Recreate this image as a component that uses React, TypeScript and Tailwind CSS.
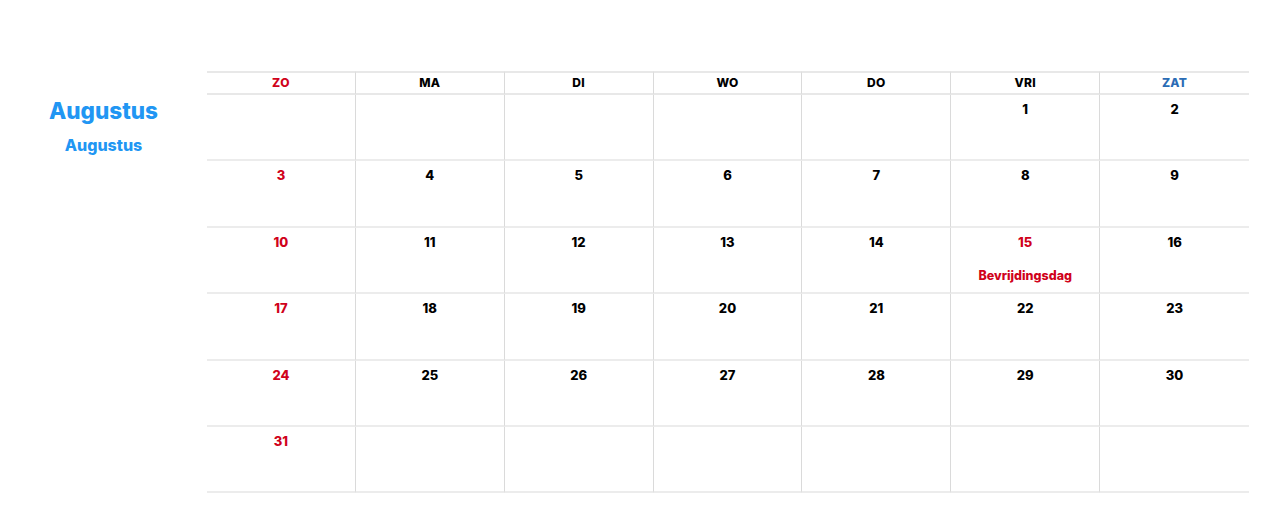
const days = ["ZO", "MA", "DI", "WO", "DO", "VRI", "ZAT"];

const cells: (number | null)[] = [
  null, null, null, null, null, 1, 2,
  3, 4, 5, 6, 7, 8, 9,
  10, 11, 12, 13, 14, 15, 16,
  17, 18, 19, 20, 21, 22, 23,
  24, 25, 26, 27, 28, 29, 30,
  31, null, null, null, null, null, null,
];

const holidays: Record<number, string> = { 15: "Bevrijdingsdag" };

export default function App() {
  return (
    <div className="w-[1280px] h-[522px] bg-white flex pt-[71px]" style={{ fontFamily: "Inter, 'Noto Sans', sans-serif" }}>
      <div className="w-[207px] flex flex-col items-center pt-[26px]">
        <h1 className="text-[22.5px] font-extrabold text-[#2196f3] leading-[28px]">Augustus</h1>
        <h2 className="text-[16px] font-extrabold text-[#2196f3] mt-[8px]">Augustus</h2>
      </div>
      <div className="w-[1042px] grid grid-cols-7 auto-rows-min self-start">
        {days.map((d, i) => (
          <div
            key={d}
            className={`h-[24px] flex items-center justify-center border-t-2 border-b-2 border-[#e8e8e8] text-[12px] font-extrabold tracking-wide ${
              i < 6 ? "border-r border-r-[#dadada]" : ""
            } ${i === 0 ? "text-[#d0021b]" : i === 6 ? "text-[#2b6cb5]" : "text-black"}`}
          >
            {d}
          </div>
        ))}
        {cells.map((n, idx) => {
          const col = idx % 7;
          const red = col === 0 || (n !== null && holidays[n]);
          return (
            <div
              key={idx}
              className={`h-[66.4px] flex flex-col items-center pt-[5px] border-b-2 border-[#ececec] ${
                col < 6 ? "border-r border-r-[#dadada]" : ""
              }`}
            >
              {n !== null && (
                <span className={`text-[13px] font-extrabold ${red ? "text-[#d0021b]" : "text-black"}`}>{n}</span>
              )}
              {n !== null && holidays[n] && (
                <span className="text-[12.5px] font-extrabold text-[#d0021b] mt-[15px]">{holidays[n]}</span>
              )}
            </div>
          );
        })}
      </div>
    </div>
  );
}
